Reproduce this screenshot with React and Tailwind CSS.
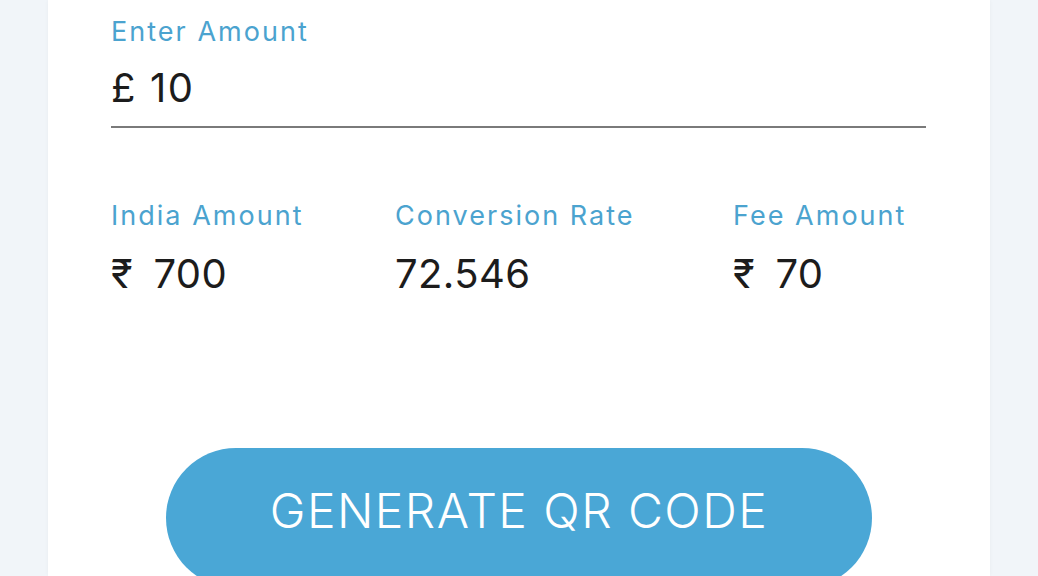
import React, { useState } from 'react';

const font = { fontFamily: 'Inter, "Noto Sans", sans-serif' };

const stats = [
  { label: 'India Amount', value: '₹\u2002700' },
  { label: 'Conversion Rate', value: '72.546' },
  { label: 'Fee Amount', value: '₹\u200270' },
];

const App = () => {
  const [amount, setAmount] = useState('£ 10');

  return (
    <div className="h-[576px] overflow-hidden bg-[#f1f5f9] px-[48px]" style={font}>
      <div className="h-full bg-white shadow-[0_0_4px_rgba(0,0,0,0.04)]">
        <div className="pl-[63px] pr-[64px] pt-[14px]">
          {/* Amount input */}
          <label className="block text-[27px] leading-[36px] text-[#4ba3cf] tracking-[0.075em]">Enter Amount</label>
          <input
            type="text"
            value={amount}
            onChange={(e) => setAmount(e.target.value)}
            className="mt-[14px] block w-full border-b-2 border-[#7a7a7a] bg-transparent pb-[14px] text-[40px] leading-[48px] tracking-[0.04em] text-[#1c1c1c] outline-none"
          />

          {/* Stats */}
          <div className="mt-[70px] grid grid-cols-[284px_338px_1fr]">
            {stats.map((s) => (
              <div key={s.label}>
                <div className="text-[27px] leading-[36px] text-[#4ba3cf] tracking-[0.075em]">{s.label}</div>
                <div className="mt-[16px] text-[40px] leading-[48px] tracking-[0.01em] text-[#1c1c1c]">{s.value}</div>
              </div>
            ))}
          </div>
        </div>

        {/* Action */}
        <div className="mt-[150px] flex justify-center">
          <button className="h-[140px] w-[706px] rounded-full bg-[#4aa7d6] pb-[14px] text-[48px] font-light tracking-[0.03em] text-white">
            GENERATE QR CODE
          </button>
        </div>
      </div>
    </div>
  );
};

export default App;
